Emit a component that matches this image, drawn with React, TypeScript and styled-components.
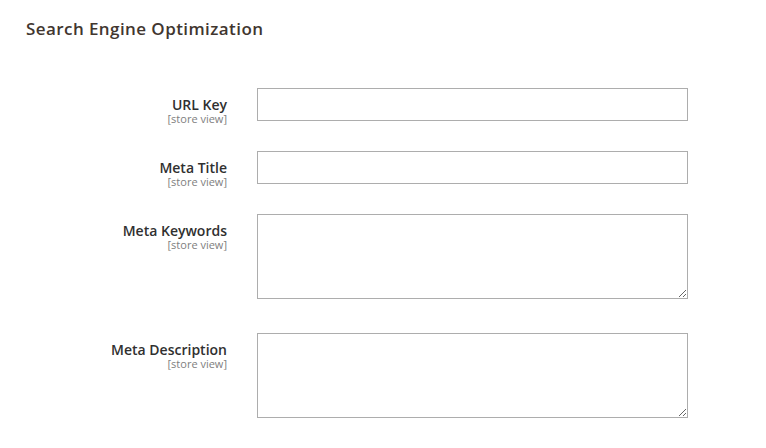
import React, { FC } from 'react';
import styled, { createGlobalStyle } from 'styled-components';

const GlobalStyle = createGlobalStyle`
  html, body {
    margin: 0;
    padding: 0;
    background: #fff;
  }

  body {
    font-family: 'Open Sans', 'Liberation Sans', sans-serif;
    color: #303030;
  }
`;

const Page = styled.div`
  padding: 17px 26px 0 26px;
`;

const Title = styled.h2`
  margin: 0 0 48px 0;
  font-size: 17px;
  line-height: 23px;
  font-weight: 600;
  color: #41362f;
  letter-spacing: 0.42px;
`;

const Fieldset = styled.div`
  display: flex;
  flex-direction: column;
`;

const Field = styled.div<{ $gap: number }>`
  display: grid;
  grid-template-columns: 201px 431px;
  column-gap: 30px;
  align-items: start;
  margin-bottom: ${ props => props.$gap }px;
`;

// label column is taller than a one-line input; the negative margin keeps
// the row at the height of its control
const LabelBox = styled.div`
  text-align: right;
  padding-top: 10px;
  margin-bottom: -6px;
`;

const Label = styled.label`
  display: block;
  font-size: 14px;
  line-height: 14px;
  font-weight: 600;
  color: #303030;
`;

const Scope = styled.div`
  font-size: 11px;
  line-height: 14px;
  color: #808080;
`;

const TextInput = styled.input`
  box-sizing: border-box;
  display: block;
  width: 100%;
  height: 33px;
  margin: 0;
  border: 1px solid #adadad;
  border-radius: 0;
  background: #fff;
  outline: none;
`;

const TextArea = styled.textarea`
  box-sizing: border-box;
  display: block;
  width: 100%;
  height: 85px;
  margin: 0;
  border: 1px solid #adadad;
  border-radius: 0;
  background: #fff;
  outline: none;
  resize: vertical;
`;

interface FieldRowProps {
  label: string;
  multiline?: boolean;
  gap: number;
}

const FieldRow: FC<FieldRowProps> = ({ label, multiline, gap }) => (
  <Field $gap={ gap }>
    <LabelBox>
      <Label>{ label }</Label>
      <Scope>[store view]</Scope>
    </LabelBox>
    <div>
      { multiline ? <TextArea /> : <TextInput type='text' /> }
    </div>
  </Field>
);

const App: FC = () => (
  <>
    <GlobalStyle />
    <Page>
      <Title>Search Engine Optimization</Title>
      <Fieldset>
        <FieldRow label='URL Key' gap={ 30 } />
        <FieldRow label='Meta Title' gap={ 30 } />
        <FieldRow label='Meta Keywords' multiline gap={ 34 } />
        <FieldRow label='Meta Description' multiline gap={ 34 } />
      </Fieldset>
    </Page>
  </>
);

export default App;
